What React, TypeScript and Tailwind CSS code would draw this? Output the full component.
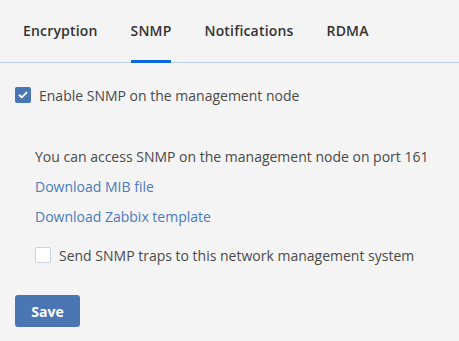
import React from 'react'

const tabs = ['Encryption', 'SNMP', 'Notifications', 'RDMA']

const App = () => {
  return (
    <section className="w-[459px] h-[341px] bg-[#f4f4f4] text-[14px] text-[#4a4a4a] font-['Open_Sans',sans-serif] overflow-hidden">
      {/* Tabs */}
      <nav className="flex gap-[33px] pl-[23px] h-[63px] border-b border-[#bcd0e6]">
        {tabs.map((tab) => (
          <div
            key={tab}
            className={`flex items-center font-semibold tracking-[0.18px] text-[#333] border-b-[3px] mb-[-1px] ${
              tab === 'SNMP' ? 'border-[#0b6ae0]' : 'border-transparent'
            }`}
          >
            {tab}
          </div>
        ))}
      </nav>

      <main className="flex flex-col pl-[15px]">
        {/* Enable checkbox */}
        <label className="mt-[22px] flex items-center gap-2 h-5">
          <span className="w-4 h-4 rounded-[2px] bg-[#4a76b5] flex items-center justify-center">
            <svg width="10" height="8" viewBox="0 0 10 8" fill="none">
              <path d="M1.5 4.2 L3.8 6.3 L8.5 1.6" stroke="white" strokeWidth="1.9" strokeLinecap="round" strokeLinejoin="round" />
            </svg>
          </span>
          <span>Enable SNMP on the management node</span>
        </label>

        <div className="flex flex-col pl-5">
          <p className="mt-[42px] leading-5">You can access SNMP on the management node on port 161</p>
          <a className="mt-[10px] leading-5 text-[#4a7bbd] w-fit">Download MIB file</a>
          <a className="mt-[10px] leading-5 text-[#4a7bbd] w-fit">Download Zabbix template</a>

          <label className="mt-[18px] flex items-center gap-2 h-5">
            <span className="w-4 h-4 rounded-[2px] bg-white border border-[#c7d3e2]" />
            <span>Send SNMP traps to this network management system</span>
          </label>
        </div>

        <button className="mt-[30px] w-[65px] h-8 rounded-[3px] bg-[#4a76b3] text-white font-bold">
          Save
        </button>
      </main>
    </section>
  )
}

export default App
